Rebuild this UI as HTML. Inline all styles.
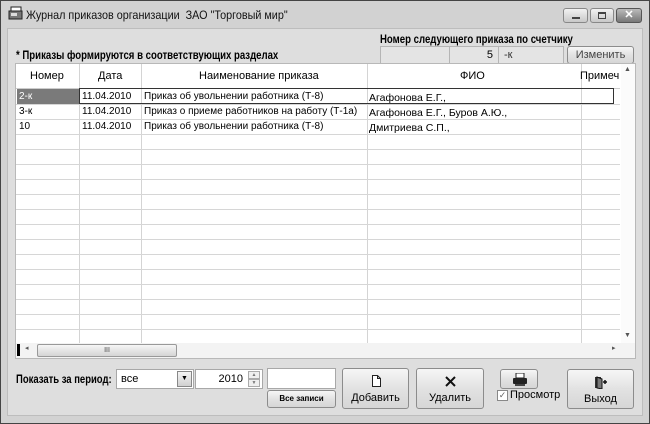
<!DOCTYPE html>
<html><head><meta charset="utf-8"><style>
*{margin:0;padding:0;box-sizing:border-box}
body{width:650px;height:424px;overflow:hidden;background:#cfcfcf;font-family:"Liberation Sans",sans-serif;font-size:11px;color:#000;position:relative}
.a{position:absolute}
.n{transform-origin:0 0;white-space:nowrap}
.win{left:0;top:0;width:650px;height:424px;border:1px solid #444;background:#d2d2d2}
.client{left:7px;top:28px;width:636px;height:388px;background:#dedede;border:1px solid #bdbdbd}
.btn{position:absolute;border:1px solid #8c8c8c;border-radius:3px;background:linear-gradient(#f6f6f6,#e2e2e2 50%,#d6d6d6);text-align:center}
.fld{position:absolute;background:#e4e4e4;border:1px solid #b5b5b5}
.inp{position:absolute;background:#fff;border:1px solid #a8a8a8}
.c{position:absolute;top:0;height:100%;border-left:1px solid #d4d4d4}
</style></head><body>
<div class="a win"></div>
<svg class="a" style="left:8px;top:6px" width="16" height="14"><rect x="3" y="1" width="10" height="7" fill="#fff" stroke="#222"/><rect x="1" y="5" width="13" height="8" fill="#777" stroke="#222"/><rect x="3" y="7" width="6" height="3" fill="#ddd"/></svg>
<div class="a n" style="left:26px;top:8px;font-size:12px;color:#111;transform:scaleX(0.9)">Журнал приказов организации&nbsp; ЗАО "Торговый мир"</div>
<div class="a" style="left:563px;top:8px;width:25px;height:15px;border:1px solid #888;border-radius:3px;background:linear-gradient(#f2f2f2,#c8c8c8)"><div class="a" style="left:8px;top:8px;width:8px;height:2px;background:#444"></div></div>
<div class="a" style="left:590px;top:8px;width:24px;height:15px;border:1px solid #888;border-radius:3px;background:linear-gradient(#f2f2f2,#c8c8c8)"><div class="a" style="left:7px;top:3px;width:8px;height:7px;border:1px solid #444;border-top-width:2px"></div></div>
<div class="a" style="left:616px;top:8px;width:26px;height:15px;border:1px solid #555;border-radius:3px;background:linear-gradient(#bbb,#777);color:#fff;font-weight:bold;font-size:11px;text-align:center;line-height:13px">✕</div>
<div class="a client"></div>

<div class="a n" style="left:380px;top:32px;font-weight:bold;font-size:12px;transform:scaleX(0.8)">Номер следующего приказа по счетчику</div>
<div class="fld" style="left:380px;top:46px;width:70px;height:18px"></div>
<div class="fld" style="left:449px;top:46px;width:50px;height:18px;text-align:right;padding-right:5px;line-height:16px">5</div>
<div class="fld" style="left:498px;top:46px;width:66px;height:18px;padding-left:5px;line-height:16px;color:#333">-к</div>
<div class="btn" style="left:567px;top:46px;width:67px;height:18px;line-height:16px;color:#444">Изменить</div>
<div class="a n" style="left:16px;top:48px;font-weight:bold;font-size:12px;transform:scaleX(0.8)">* Приказы формируются в соответствующих разделах</div>

<div class="a" style="left:15px;top:63px;width:621px;height:296px;background:#fff;border:1px solid #b8b8b8">
 <div class="a" style="left:0;top:0;width:604px;height:279px;overflow:hidden">
  <div class="c" style="left:63px"></div><div class="c" style="left:125px"></div><div class="c" style="left:351px"></div><div class="c" style="left:565px"></div>
 </div>
 <div class="a" style="left:0;top:0;width:604px;height:25px;background:#fff;border-bottom:1px solid #ccc;font-size:11px">
  <div class="c" style="left:63px"></div><div class="c" style="left:125px"></div><div class="c" style="left:351px"></div><div class="c" style="left:565px"></div>
  <span class="a" style="left:14px;top:6px">Номер</span><span class="a" style="left:82px;top:6px">Дата</span><span class="a" style="left:183px;top:6px">Наименование приказа</span><span class="a" style="left:444px;top:6px">ФИО</span><span class="a" style="left:564px;top:6px">Примеч</span>
 </div>
 <div class="a" style="left:605px;top:0;width:14px;height:279px;background:#fbfbfb"><span class="a" style="left:3px;top:2px;font-size:7px;color:#555">▲</span><span class="a" style="left:3px;top:268px;font-size:7px;color:#555">▼</span></div>
 <div class="a" style="left:0;top:279px;width:619px;height:15px;background:#f3f3f3">
  <div class="a" style="left:1px;top:1px;width:3px;height:12px;background:#000"></div>
  <span class="a" style="left:9px;top:1px;font-size:7px;color:#555">◂</span>
  <div class="a" style="left:21px;top:1px;width:140px;height:13px;border:1px solid #999;border-radius:2px;background:linear-gradient(#f6f6f6,#d4d4d4);font-size:7px;text-align:center;line-height:11px;color:#444">III</div>
  <span class="a" style="left:596px;top:1px;font-size:7px;color:#555">▸</span>
 </div>
</div>
<div class="a" style="left:17px;top:89px;width:62px;height:15px;background:#7a7a7a;color:#fff;font-size:10px;padding:2px 2px">2-к</div>
<div class="a" style="left:79px;top:88px;width:535px;height:16px;border:1px solid #333"></div>
<div class="a" style="top:91px;left:82px;font-size:10px">11.04.2010</div><div class="a" style="top:91px;left:144px;font-size:10px">Приказ об увольнении работника (Т-8)</div><div class="a" style="top:92px;left:369px;font-size:10.5px">Агафонова Е.Г.,</div>
<div class="a" style="top:106px;left:19px;font-size:10px">3-к</div><div class="a" style="top:106px;left:82px;font-size:10px">11.04.2010</div><div class="a" style="top:106px;left:144px;font-size:10px">Приказ о приеме работников на работу (Т-1а)</div><div class="a" style="top:107px;left:369px;font-size:10.5px">Агафонова Е.Г., Буров А.Ю.,</div>
<div class="a" style="top:121px;left:19px;font-size:10px">10</div><div class="a" style="top:121px;left:82px;font-size:10px">11.04.2010</div><div class="a" style="top:121px;left:144px;font-size:10px">Приказ об увольнении работника (Т-8)</div><div class="a" style="top:122px;left:369px;font-size:10.5px">Дмитриева С.П.,</div>
<svg class="a" style="left:16px;top:64px" width="604" height="279">
 <g stroke="#d6d6d6" stroke-width="1">
  <line x1="0" x2="604" y1="40.5" y2="40.5"/><line x1="0" x2="604" y1="55.5" y2="55.5"/><line x1="0" x2="604" y1="70.5" y2="70.5"/>
  <line x1="0" x2="604" y1="85.5" y2="85.5"/><line x1="0" x2="604" y1="100.5" y2="100.5"/><line x1="0" x2="604" y1="115.5" y2="115.5"/>
  <line x1="0" x2="604" y1="130.5" y2="130.5"/><line x1="0" x2="604" y1="145.5" y2="145.5"/><line x1="0" x2="604" y1="160.5" y2="160.5"/>
  <line x1="0" x2="604" y1="175.5" y2="175.5"/><line x1="0" x2="604" y1="190.5" y2="190.5"/><line x1="0" x2="604" y1="205.5" y2="205.5"/>
  <line x1="0" x2="604" y1="220.5" y2="220.5"/><line x1="0" x2="604" y1="235.5" y2="235.5"/><line x1="0" x2="604" y1="250.5" y2="250.5"/>
  <line x1="0" x2="604" y1="265.5" y2="265.5"/>
 </g>
</svg>

<div class="a n" style="left:16px;top:372px;font-weight:bold;font-size:12px;transform:scaleX(0.79)">Показать за период:</div>
<div class="inp" style="left:116px;top:369px;width:78px;height:20px;padding:3px 4px;font-size:11px">все</div>
<div class="a" style="left:177px;top:371px;width:15px;height:16px;border:1px solid #888;background:linear-gradient(#f4f4f4,#d0d0d0);font-size:7px;text-align:center;line-height:14px">▼</div>
<div class="inp" style="left:195px;top:369px;width:68px;height:20px;padding:3px 19px 0 0;text-align:right;font-size:11px">2010</div>
<div class="a" style="left:248px;top:371px;width:12px;height:8px;border:1px solid #aaa;background:#eee;font-size:5px;text-align:center;line-height:6px;color:#777">▲</div>
<div class="a" style="left:248px;top:379px;width:12px;height:8px;border:1px solid #aaa;background:#eee;font-size:5px;text-align:center;line-height:6px;color:#777">▼</div>
<div class="inp" style="left:267px;top:368px;width:69px;height:21px"></div>
<div class="btn" style="left:267px;top:390px;width:69px;height:18px;font-size:8px;font-weight:bold;line-height:16px">Все записи</div>
<div class="btn" style="left:342px;top:368px;width:67px;height:41px"><svg class="a" style="left:28px;top:6px" width="10" height="12"><path d="M1.5 .5h5l3 3v8h-8z M6.5 .5v3h3" fill="#fff" stroke="#222"/></svg><span class="a" style="left:0;width:100%;top:23px;font-size:11px">Добавить</span></div>
<div class="btn" style="left:416px;top:368px;width:68px;height:41px"><svg class="a" style="left:28px;top:7px" width="11" height="11"><path d="M1 1L10 10M10 1L1 10" stroke="#111" stroke-width="2"/></svg><span class="a" style="left:0;width:100%;top:23px;font-size:11px">Удалить</span></div>
<div class="btn" style="left:500px;top:369px;width:38px;height:20px"><svg class="a" style="left:11px;top:3px" width="16" height="13"><rect x="4" y="0" width="8" height="5" fill="#fff" stroke="#222"/><rect x="1" y="5" width="14" height="6" rx="1" fill="#222"/><rect x="3" y="11" width="10" height="2" fill="#444"/></svg></div>
<div class="a" style="left:497px;top:390px;width:11px;height:11px;border:1px solid #888;background:#fff;font-size:9px;line-height:9px;text-align:center;color:#666">✓</div>
<div class="a" style="left:510px;top:389px;font-size:11px">Просмотр</div>
<div class="btn" style="left:567px;top:369px;width:67px;height:40px"><svg class="a" style="left:26px;top:6px" width="14" height="13"><path d="M1 1h6v11H1z" fill="#333"/><path d="M3 1l5 2v10l-5-1z" fill="#777" stroke="#111"/><path d="M9 6h4M11 4v4" stroke="#111" stroke-width="1.5"/></svg><span class="a" style="left:0;width:100%;top:23px;font-size:11px">Выход</span></div>
</body></html>
